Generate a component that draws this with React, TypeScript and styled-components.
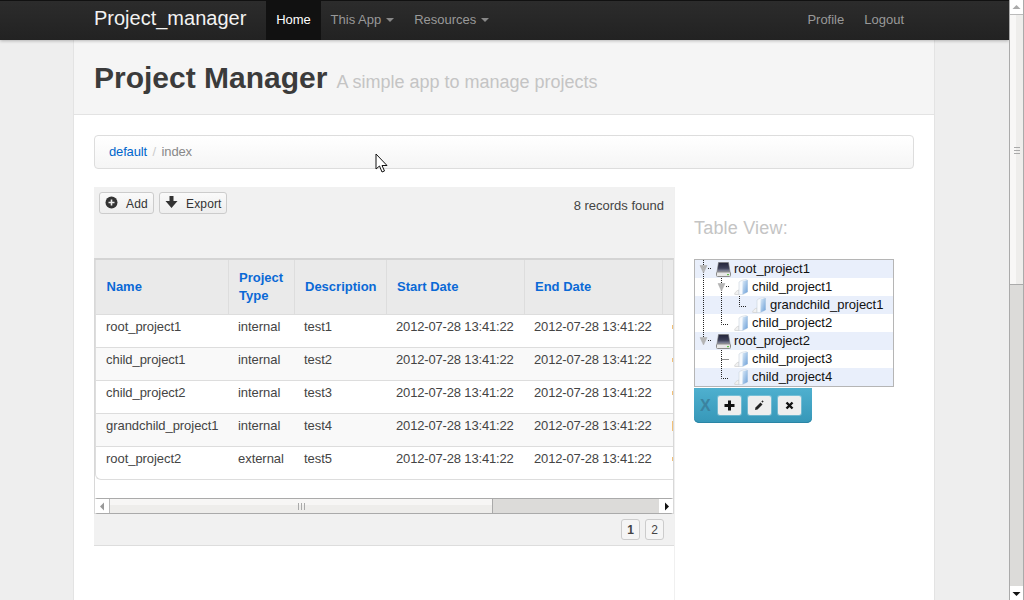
import React from 'react';
import styled, { createGlobalStyle } from 'styled-components';

const GlobalStyle = createGlobalStyle`
  html, body { margin: 0; padding: 0; height: 100%; overflow: hidden; }
  body { font-family: "Liberation Sans", Arial, sans-serif; font-size: 13px; color: #333; }
`;

const Shell = styled.div`
  display: flex;
  width: 1024px;
  height: 600px;
  overflow: hidden;
`;
const Page = styled.div`
  position: relative;
  flex: 1;
  min-width: 0;
  background: #eee;
  overflow: hidden;
`;

/* navbar */
const Navbar = styled.nav`
  position: relative;
  height: 40px;
  box-sizing: border-box;
  border-top: 1px solid #111;
  padding: 0 95px 0 94px;
  display: flex;
  align-items: stretch;
  background: linear-gradient(#2c2c2c, #222);
  box-shadow: 0 1px 3px rgba(0, 0, 0, 0.25);
`;
const Brand = styled.a`
  font-size: 20px;
  line-height: 34px;
  color: #f2f2f2;
  margin-right: 20px;
`;
const NavItem = styled.a<{ $active?: boolean }>`
  display: flex;
  align-items: center;
  gap: 5px;
  padding: 0 10px 2px;
  font-size: 13px;
  letter-spacing: ${p => (p.$active ? '-0.1px' : '0')};
  color: ${p => (p.$active ? '#fff' : '#999')};
  background: ${p => (p.$active ? '#111' : 'transparent')};
`;
const Caret = styled.span`
  display: inline-block;
  border-left: 4px solid transparent;
  border-right: 4px solid transparent;
  border-top: 4px solid #888;
  margin-top: 1px;
`;
const NavSpacer = styled.div`
  flex: 1;
`;

/* page container */
const Container = styled.div`
  width: 860px;
  height: 560px;
  margin-left: 73px;
  background: #fff;
  border-left: 1px solid #e3e3e3;
  border-right: 1px solid #e3e3e3;
`;
const Hero = styled.header`
  height: 74px;
  box-sizing: content-box;
  padding: 0 20px;
  display: flex;
  align-items: baseline;
  gap: 9px;
  background: #f5f5f5;
  border-bottom: 1px solid #e3e3e3;
`;
const Title = styled.h1`
  margin: 0;
  font-size: 30px;
  line-height: 76px;
  font-weight: bold;
  color: #3b3b3b;
`;
const Subtitle = styled.small`
  font-size: 18px;
  color: #c4c4c4;
`;
const Content = styled.div`
  padding: 20px 20px 0;
`;
const Breadcrumb = styled.div`
  height: 30px;
  padding: 0 14px 2px;
  display: flex;
  align-items: center;
  gap: 5.5px;
  background: linear-gradient(#fff, #f5f5f5);
  border: 1px solid #ddd;
  border-radius: 4px;
  color: #ccc;
`;
const Link = styled.a`
  color: #0066cc;
  letter-spacing: -0.15px;
`;
const Current = styled.span`
  color: #888;
  letter-spacing: -0.15px;
`;
const Columns = styled.div`
  display: flex;
  margin-top: 18px;
`;

/* grid */
const GridColumn = styled.section`
  width: 580px;
  height: 413px;
  flex: none;
  border-right: 1px solid #f0f0f0;
`;
const GridToolbar = styled.div`
  height: 71px;
  padding: 5px 10px 0 5px;
  box-sizing: border-box;
  display: flex;
  align-items: flex-start;
  gap: 5px;
  background: #f1f1f1;
`;
const ToolButton = styled.button<{ $w: number }>`
  width: ${p => p.$w}px;
  height: 22px;
  box-sizing: border-box;
  display: flex;
  align-items: center;
  padding: 2px 0 0 5px;
  background: linear-gradient(#fafafa, #eee);
  border: 1px solid #ccc;
  border-radius: 3px;
  font: 12px "Liberation Sans", Arial, sans-serif;
  letter-spacing: 0.15px;
  color: #333;
  svg { display: block; margin: -4px 8px 0 0; }
`;
const Records = styled.span`
  margin-left: auto;
  margin-top: 7px;
  font-size: 13px;
  line-height: 14px;
  color: #444;
`;
const GridFrame = styled.div`
  position: relative;
  height: 256px;
  box-sizing: border-box;
  background: #fff;
  border-top: 2px solid #d4d4d4;
  border-left: 1px solid #d8d8d8;
  border-right: 1px solid #d8d8d8;
  overflow: hidden;
`;
const TableClip = styled.div`
  height: 220px;
  box-sizing: border-box;
  overflow: hidden;
  border-left: 1px solid #ddd;
  border-bottom: 1px solid #ddd;
  border-bottom-left-radius: 6px;
`;
const Table = styled.table`
  width: 700px;
  table-layout: fixed;
  border-collapse: collapse;
  font-size: 13px;
  tbody tr:nth-child(even) { background: #f9f9f9; }
`;
const HeadCell = styled.th<{ $w: number }>`
  width: ${p => p.$w}px;
  height: 54px;
  box-sizing: border-box;
  padding: 0 10px 0 10.5px;
  text-align: left;
  line-height: 18px;
  font-weight: bold;
  color: #0a69d6;
  background: #eaeaea;
  border-right: 1px solid #ddd;
  border-bottom: 1px solid #ddd;
`;
const Cell = styled.td<{ $date?: boolean }>`
  height: 33px;
  box-sizing: border-box;
  padding: 0 10px 7px 10px;
  white-space: nowrap;
  overflow: hidden;
  line-height: 18px;
  letter-spacing: ${p => (p.$date ? '-0.16px' : '-0.05px')};
  color: #444;
  border-bottom: 1px solid #ddd;
`;
const ActionMark = styled.span<{ $wide?: boolean }>`
  display: block;
  width: 2px;
  height: ${p => (p.$wide ? 10 : 4)}px;
  background: #f2c078;
`;

/* scrollbars */
const HScroll = styled.div`
  position: absolute;
  left: -1px;
  right: -1px;
  bottom: 0;
  height: 16px;
  box-sizing: border-box;
  display: flex;
  border: 1px solid #aaa;
  border-radius: 3px;
  background: #dcdbd9;
`;
const ScrollBtn = styled.div`
  width: 14px;
  flex: none;
  display: flex;
  align-items: center;
  justify-content: center;
  background: #fff;
`;
const HThumb = styled.div`
  width: 382px;
  flex: none;
  display: flex;
  align-items: center;
  justify-content: center;
  background: linear-gradient(#f7f6f5 45%, #eeedeb 45%);
  border-left: 1px solid #bbb;
  border-right: 1px solid #aaa;
`;
const HTrack = styled.div`
  flex: 1;
`;
const GridFooter = styled.div`
  height: 32px;
  box-sizing: border-box;
  padding: 5px 10px 0 0;
  display: flex;
  justify-content: flex-end;
  align-items: flex-start;
  gap: 5px;
  background: #f1f1f1;
  border-bottom: 1px solid #ddd;
`;
const PageBtn = styled.span<{ $active?: boolean }>`
  width: 19px;
  height: 21px;
  box-sizing: border-box;
  display: flex;
  align-items: center;
  justify-content: center;
  background: #f5f5f5;
  border: 1px solid #ccc;
  border-radius: 3px;
  font-size: 12px;
  font-weight: ${p => (p.$active ? 'bold' : 'normal')};
  color: #444;
`;

/* tree */
const SideColumn = styled.aside`
  padding-left: 19px;
  width: 220px;
`;
const SideTitle = styled.h3`
  margin: 30px 0 0;
  font-size: 18px;
  font-weight: normal;
  line-height: 22px;
  letter-spacing: 0.2px;
  color: #c4c4c4;
`;
const Tree = styled.div`
  width: 198px;
  margin-top: 20px;
  border: 1px solid #b5b5b5;
`;
const TreeRow = styled.div<{ $odd: boolean }>`
  height: 18px;
  display: flex;
  align-items: center;
  background: ${p => (p.$odd ? '#e9effb' : '#fff')};
  svg { display: block; flex: none; }
`;
const TreeIcon = styled.span`
  margin-left: 3px;
  display: block;
`;
const TreeLabel = styled.span`
  margin-left: 3px;
  font-size: 13px;
  line-height: 18px;
  color: #111;
`;
const TreeBar = styled.div`
  width: 118px;
  height: 35px;
  margin-top: 1px;
  box-sizing: border-box;
  padding: 8px 0 0 6px;
  display: flex;
  align-items: flex-start;
  gap: 7px;
  background: linear-gradient(#4fb0cf, #3697b8);
  border-radius: 0 0 5px 5px;
  box-shadow: inset 0 -1px 0 #2a85a5;
`;
const TreeBarMark = styled.span`
  width: 11px;
  font-size: 16px;
  line-height: 20px;
  font-weight: bold;
  color: #3b83a0;
`;
const TreeBtn = styled.span`
  width: 23px;
  height: 19px;
  display: flex;
  align-items: center;
  justify-content: center;
  background: #eee;
  border-radius: 2px;
  box-shadow: 0 0 0 1px rgba(255, 255, 255, 0.25);
`;

/* page scrollbar */
const PageBar = styled.div`
  width: 15px;
  flex: none;
  box-sizing: border-box;
  display: flex;
  flex-direction: column;
  background: #dcdbd9;
  border-left: 1px solid #aaa;
  border-right: 1px solid #aaa;
`;
const PageBtnV = styled.div`
  height: 14px;
  flex: none;
  display: flex;
  align-items: center;
  justify-content: center;
  background: #fff;
`;
const PageThumb = styled.div`
  height: 269px;
  flex: none;
  display: flex;
  align-items: center;
  justify-content: center;
  background: linear-gradient(90deg, #f8f7f6 45%, #eeedeb 45%);
  border-top: 1px solid #bbb;
  border-bottom: 1px solid #aaa;
`;
const PageTrack = styled.div`
  flex: 1;
`;
const Pointer = styled.svg`
  position: absolute;
  left: 375px;
  top: 153px;
`;

type Guide = 'blank' | 'pipe' | 'open' | 'openEnd' | 'tee' | 'end';

const GuideCell = ({ kind, x }: { kind: Guide; x: number }) => {
  const c = x + 8.5;
  const dot = { stroke: '#222', strokeDasharray: '1 1', fill: 'none' };
  switch (kind) {
    case 'pipe':
      return <path d={`M${c} 0V18`} {...dot} />;
    case 'tee':
      return <path d={`M${c} 0V18M${c} 9.5H${x + 16}`} {...dot} />;
    case 'end':
      return <path d={`M${c} 0V10.5H${x + 16}`} {...dot} />;
    case 'open':
    case 'openEnd':
      return (
        <>
          <path d={kind === 'open' ? `M${c} 0V18` : `M${c} 0V5`} {...dot} />
          <path d={`M${x + 13} 8.5H${x + 16}`} {...dot} />
          <path d={`M${x + 5} 5.5H${x + 12}L${c} 13Z`} fill="#b5b5b5" stroke="#aaa" strokeWidth="0.5" />
        </>
      );
    default:
      return null;
  }
};

const Guides = ({ cells }: { cells: Guide[] }) => (
  <svg width={cells.length * 18} height={18}>
    {cells.map((kind, i) => (
      <GuideCell key={i} kind={kind} x={i * 18} />
    ))}
  </svg>
);

const DiskIcon = () => (
  <svg width="15" height="15" viewBox="0 0 15 15">
    <defs>
      <linearGradient id="diskTop" x1="0" y1="0" x2="0" y2="1">
        <stop offset="0" stopColor="#23253a" />
        <stop offset="0.6" stopColor="#3d4058" />
        <stop offset="1" stopColor="#9a9db0" />
      </linearGradient>
    </defs>
    <path d="M2.5 0.5H12.5L14 10H1Z" fill="url(#diskTop)" stroke="#777" strokeWidth="0.6" />
    <rect x="0.5" y="10" width="14" height="4.5" rx="1" fill="#e8e8e8" stroke="#8c8c8c" />
    <rect x="11" y="12" width="2" height="1.2" fill="#5fc04a" />
  </svg>
);

const FolderIcon = () => (
  <svg width="15" height="16" viewBox="0 0 15 16">
    <defs>
      <linearGradient id="folderBlue" x1="0" y1="0" x2="1" y2="1">
        <stop offset="0" stopColor="#dceaf7" />
        <stop offset="1" stopColor="#6b9fd8" />
      </linearGradient>
    </defs>
    <path d="M0.5 15.2C1.3 12.8 2.8 11.6 5 11V15.5H1Z" fill="#f1f1f1" stroke="#cfcfcf" strokeWidth="0.7" />
    <path d="M5 3C7 1.5 9.5 0.8 12 0.6L13.5 1.2V13L9 15.5H5Z" fill="#f8fafd" stroke="#c9d3de" strokeWidth="0.6" />
    <path d="M8.5 2.2L13.6 1V13L8.5 15.4Z" fill="url(#folderBlue)" />
  </svg>
);

const treeRows: { label: string; guides: Guide[]; icon: 'disk' | 'folder' }[] = [
  { label: 'root_project1', guides: ['open'], icon: 'disk' },
  { label: 'child_project1', guides: ['pipe', 'open'], icon: 'folder' },
  { label: 'grandchild_project1', guides: ['pipe', 'pipe', 'end'], icon: 'folder' },
  { label: 'child_project2', guides: ['pipe', 'end'], icon: 'folder' },
  { label: 'root_project2', guides: ['openEnd'], icon: 'disk' },
  { label: 'child_project3', guides: ['blank', 'tee'], icon: 'folder' },
  { label: 'child_project4', guides: ['blank', 'end'], icon: 'folder' },
];

const columns = [
  { title: 'Name', width: 132 },
  { title: <>Project<br />Type</>, width: 66 },
  { title: 'Description', width: 92 },
  { title: 'Start Date', width: 138 },
  { title: 'End Date', width: 138 },
  { title: '', width: 134 },
];

const stamp = '2012-07-28 13:41:22';
const projects = [
  ['root_project1', 'internal', 'test1'],
  ['child_project1', 'internal', 'test2'],
  ['child_project2', 'internal', 'test3'],
  ['grandchild_project1', 'internal', 'test4'],
  ['root_project2', 'external', 'test5'],
];

const Tri = ({ dir, color }: { dir: 'up' | 'down' | 'left' | 'right'; color: string }) => {
  const d = {
    up: 'M0.5 6L4.5 2L8.5 6Z',
    down: 'M0.5 3H8.5L4.5 7Z',
    left: 'M6 0.5V8.5L2 4.5Z',
    right: 'M3 0.5V8.5L7 4.5Z',
  }[dir];
  return (
    <svg width="9" height="9" viewBox="0 0 9 9">
      <path d={d} fill={color} />
    </svg>
  );
};

const App = () => (
  <Shell>
    <GlobalStyle />
    <Page>
      <Navbar>
        <Brand>Project_manager</Brand>
        <NavItem $active>Home</NavItem>
        <NavItem>This App <Caret /></NavItem>
        <NavItem>Resources <Caret /></NavItem>
        <NavSpacer />
        <NavItem>Profile</NavItem>
        <NavItem>Logout</NavItem>
      </Navbar>
      <Container>
        <Hero>
          <Title>Project Manager</Title>
          <Subtitle>A simple app to manage projects</Subtitle>
        </Hero>
        <Content>
          <Breadcrumb>
            <Link>default</Link> / <Current>index</Current>
          </Breadcrumb>
          <Columns>
            <GridColumn>
              <GridToolbar>
                <ToolButton $w={55}>
                  <svg width="13" height="13" viewBox="0 0 13 13">
                    <circle cx="6.5" cy="6.5" r="6" fill="#333" />
                    <path d="M3.5 6.5H9.5M6.5 3.5V9.5" stroke="#eee" strokeWidth="1.6" />
                  </svg>
                  Add
                </ToolButton>
                <ToolButton $w={68}>
                  <svg width="13" height="13" viewBox="0 0 13 13">
                    <path d="M4.5 0H8.5V5H12.5L6.5 12L0.5 5H4.5Z" fill="#333" />
                  </svg>
                  Export
                </ToolButton>
                <Records>8 records found</Records>
              </GridToolbar>
              <GridFrame>
                <TableClip>
                  <Table>
                    <thead>
                      <tr>
                        {columns.map((col, i) => (
                          <HeadCell key={i} $w={col.width}>{col.title}</HeadCell>
                        ))}
                      </tr>
                    </thead>
                    <tbody>
                      {projects.map(row => (
                        <tr key={row[0]}>
                          {row.map(value => (
                            <Cell key={value}>{value}</Cell>
                          ))}
                          <Cell $date>{stamp}</Cell>
                          <Cell $date>{stamp}</Cell>
                          <Cell><ActionMark $wide={row[2] === 'test4'} /></Cell>
                        </tr>
                      ))}
                    </tbody>
                  </Table>
                </TableClip>
                <HScroll>
                  <ScrollBtn><Tri dir="left" color="#999" /></ScrollBtn>
                  <HThumb>
                    <svg width="9" height="7" viewBox="0 0 9 7">
                      <path d="M1.5 0V7M4.5 0V7M7.5 0V7" stroke="#aaa" />
                    </svg>
                  </HThumb>
                  <HTrack />
                  <ScrollBtn><Tri dir="right" color="#111" /></ScrollBtn>
                </HScroll>
              </GridFrame>
              <GridFooter>
                <PageBtn $active>1</PageBtn>
                <PageBtn>2</PageBtn>
              </GridFooter>
            </GridColumn>
            <SideColumn>
              <SideTitle>Table View:</SideTitle>
              <Tree>
                {treeRows.map((row, i) => (
                  <TreeRow key={row.label} $odd={i % 2 === 0}>
                    <Guides cells={row.guides} />
                    <TreeIcon>{row.icon === 'disk' ? <DiskIcon /> : <FolderIcon />}</TreeIcon>
                    <TreeLabel>{row.label}</TreeLabel>
                  </TreeRow>
                ))}
              </Tree>
              <TreeBar>
                <TreeBarMark>X</TreeBarMark>
                <TreeBtn>
                  <svg width="11" height="11" viewBox="0 0 11 11">
                    <path d="M4 0.5H7V4H10.5V7H7V10.5H4V7H0.5V4H4Z" fill="#111" />
                  </svg>
                </TreeBtn>
                <TreeBtn>
                  <svg width="11" height="11" viewBox="0 0 11 11">
                    <path d="M1 10L1.5 7.5L6.5 2.5L8.5 4.5L3.5 9.5Z" fill="#222" />
                    <path d="M8.5 0.5V2.5M7.5 1.5H9.5" stroke="#222" strokeWidth="0.8" />
                  </svg>
                </TreeBtn>
                <TreeBtn>
                  <svg width="9" height="9" viewBox="0 0 9 9">
                    <path d="M1.5 1.5L7.5 7.5M7.5 1.5L1.5 7.5" stroke="#111" strokeWidth="2.4" />
                  </svg>
                </TreeBtn>
              </TreeBar>
            </SideColumn>
          </Columns>
        </Content>
      </Container>
      <Pointer width="14" height="21" viewBox="0 0 14 21">
        <path d="M1 1V16L4.5 13L7 19L9.5 18L7 12.5H12Z" fill="#fff" stroke="#111" />
      </Pointer>
    </Page>
    <PageBar>
      <PageBtnV><Tri dir="up" color="#aaa" /></PageBtnV>
      <PageThumb>
        <svg width="6" height="8" viewBox="0 0 6 8">
          <path d="M0 1.5H6M0 4.5H6M0 7.5H6" stroke="#aaa" />
        </svg>
      </PageThumb>
      <PageTrack />
      <PageBtnV><Tri dir="down" color="#111" /></PageBtnV>
    </PageBar>
  </Shell>
);

export default App;
